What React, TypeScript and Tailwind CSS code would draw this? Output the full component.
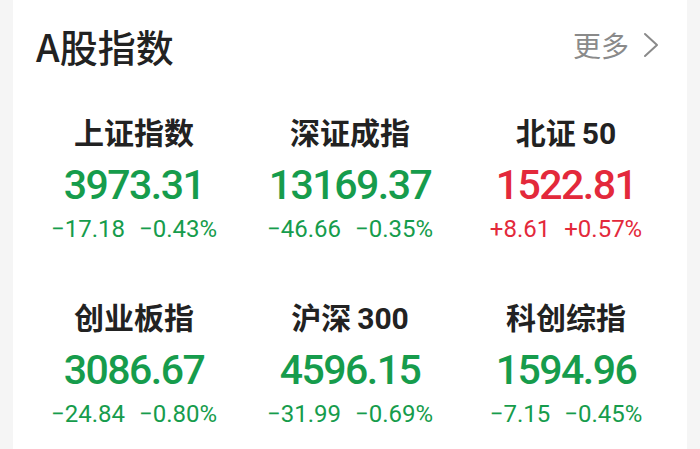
import React from "react";

interface IndexItem {
  name: string;
  suffix?: string;
  value: string;
  change: string;
  percent: string;
  up: boolean;
}

const indices: IndexItem[] = [
  { name: "上证指数", value: "3973.31", change: "−17.18", percent: "−0.43%", up: false },
  { name: "深证成指", value: "13169.37", change: "−46.66", percent: "−0.35%", up: false },
  { name: "北证", suffix: "50", value: "1522.81", change: "+8.61", percent: "+0.57%", up: true },
  { name: "创业板指", value: "3086.67", change: "−24.84", percent: "−0.80%", up: false },
  { name: "沪深", suffix: "300", value: "4596.15", change: "−31.99", percent: "−0.69%", up: false },
  { name: "科创综指", value: "1594.96", change: "−7.15", percent: "−0.45%", up: false },
];

const cjk = "font-['Noto_Sans_CJK_SC','Noto_Sans',sans-serif]";
const num = "font-['Roboto','Noto_Sans',sans-serif]";

function IndexCell({ item }: { item: IndexItem }) {
  const color = item.up ? "text-[#e3293b]" : "text-[#169c4c]";
  return (
    <div className="flex flex-col items-center">
      <div className={`h-[36px] leading-[36px] text-[30px] font-bold text-[#222] ${cjk}`}>
        {item.name}
        {item.suffix && <span className={`ml-[6px] ${num}`}>{item.suffix}</span>}
      </div>
      <div
        className={`mt-[11px] h-[50px] leading-[50px] text-[41px] font-medium tracking-[-1.5px] ${color} ${num}`}
      >
        {item.value}
      </div>
      <div className={`mt-[4px] h-[30px] leading-[30px] flex gap-[14px] text-[24px] ${color} ${num}`}>
        <span>{item.change}</span>
        <span>{item.percent}</span>
      </div>
    </div>
  );
}

export default function App() {
  return (
    <div className="w-[700px] h-[449px] bg-[#f5f5f5] px-[13px] overflow-hidden">
      <div className="bg-white h-full">
        <div className="h-[90px] flex items-center justify-between pl-[23px] pr-[28px]">
          <h1 className={`text-[38px] font-medium text-[#222] ${cjk}`}>A股指数</h1>
          <div className={`flex items-center gap-[14px] text-[28px] text-[#8a8a8a] ${cjk}`}>
            <span>更多</span>
            <svg width="16" height="28" viewBox="0 0 16 28" fill="none">
              <path d="M2 3 L14 14 L2 25" stroke="#8a8a8a" strokeWidth="2" strokeLinecap="round" strokeLinejoin="round" />
            </svg>
          </div>
        </div>
        <div className="grid grid-cols-3 px-[13px] pt-[23px] gap-y-[54px]">
          {indices.map((item) => (
            <IndexCell key={item.name} item={item} />
          ))}
        </div>
      </div>
    </div>
  );
}
